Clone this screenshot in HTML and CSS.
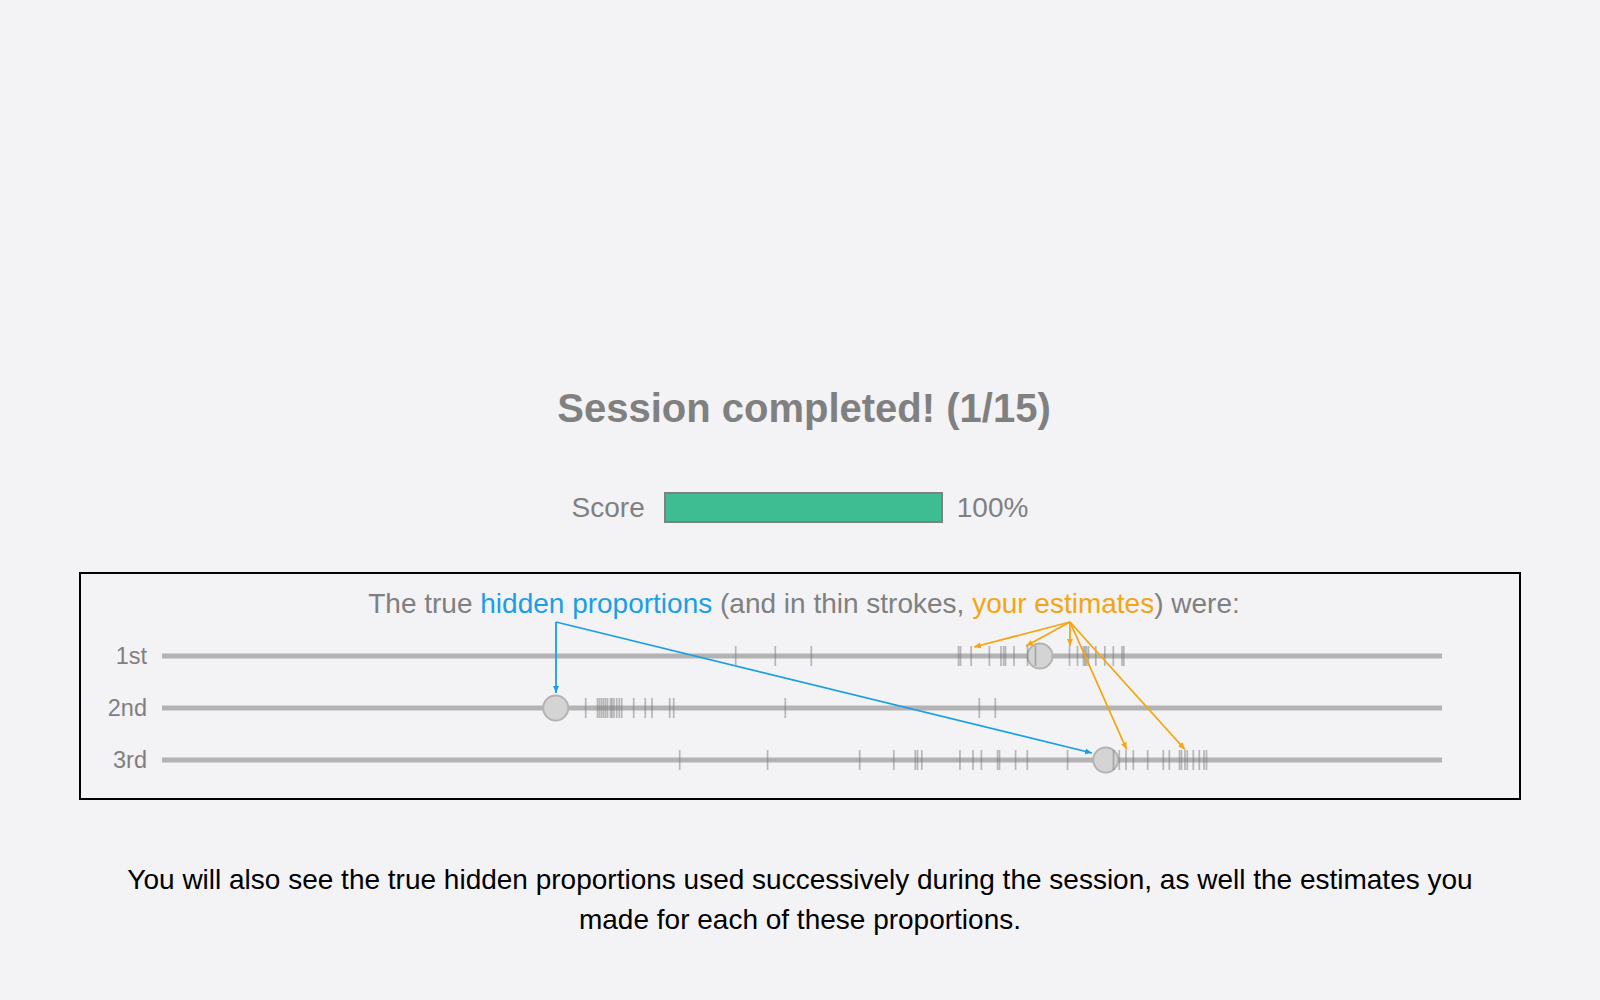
FILE: index.html
```html
<!DOCTYPE html>
<html lang="en">
<head>
<meta charset="utf-8">
<title>Session completed</title>
<link rel="stylesheet" href="styles.css">
</head>
<body>
<main class="page">
  <h1 class="title">Session completed! (1/15)</h1>
  <div class="score-row">
    <span class="score-label">Score</span>
    <div class="score-bar"><div class="score-fill" style="width:100%"></div></div>
    <span class="score-value">100%</span>
  </div>
  <section class="results">
    <p class="caption">The true <span class="blue">hidden proportions</span> (and in thin strokes, <span class="orange">your estimates</span>) were:</p>
    <svg class="chart" width="1438" height="179" viewBox="0 0 1438 179" xmlns="http://www.w3.org/2000/svg">
      <defs>
        <marker id="ab" markerUnits="userSpaceOnUse" markerWidth="8" markerHeight="8" refX="7" refY="4" orient="auto">
          <path d="M0,1 L7,4 L0,7 Z" fill="#1a9fe6"/>
        </marker>
        <marker id="ao" markerUnits="userSpaceOnUse" markerWidth="8" markerHeight="8" refX="7" refY="4" orient="auto">
          <path d="M0,1 L7,4 L0,7 Z" fill="#f4a512"/>
        </marker>
      </defs>
      <g class="labels">
        <text x="66" y="45">1st</text>
        <text x="66" y="97">2nd</text>
        <text x="66" y="149">3rd</text>
      </g>
      <g class="tracks">
        <line x1="81" y1="37" x2="1361" y2="37"/>
        <line x1="81" y1="89" x2="1361" y2="89"/>
        <line x1="81" y1="141" x2="1361" y2="141"/>
      </g>
      <g class="dots">
        <circle cx="959" cy="37" r="12.5"/>
        <circle cx="474.7" cy="89" r="12.5"/>
        <circle cx="1024.7" cy="141" r="12.5"/>
      </g>
      <g class="ticks" id="ticks"></g>
      <g class="arrows-blue">
        <line x1="475" y1="3" x2="475" y2="74" marker-end="url(#ab)"/>
        <line x1="475" y1="3" x2="1011" y2="134" marker-end="url(#ab)"/>
      </g>
      <g class="arrows-orange">
        <line x1="989" y1="3" x2="893" y2="28" marker-end="url(#ao)"/>
        <line x1="989" y1="3" x2="945" y2="27" marker-end="url(#ao)"/>
        <line x1="989" y1="3" x2="989" y2="27" marker-end="url(#ao)"/>
        <line x1="989" y1="3" x2="1045.7" y2="130.5" marker-end="url(#ao)"/>
        <line x1="989" y1="3" x2="1104" y2="130.5" marker-end="url(#ao)"/>
      </g>
    </svg>
  </section>
  <p class="note">You will also see the true hidden proportions used successively during the session, as well the estimates you made for each of these proportions.</p>
</main>
<script src="script.js"></script>
</body>
</html>
```

FILE: styles.css
```css
html, body {
  margin: 0;
  padding: 0;
  background: #f3f2f5;
}

body {
  font-family: "Liberation Sans", Arial, sans-serif;
  font-size: 28px;
  color: #808080;
}

.page {
  display: flex;
  flex-direction: column;
  align-items: center;
  padding-top: 385px;
}

.title {
  margin: 0;
  font-size: 40px;
  line-height: 46px;
  font-weight: bold;
  color: #808080;
  padding-left: 8px;
}

.score-row {
  margin-top: 61px;
  display: flex;
  align-items: center;
  height: 31px;
  line-height: 31px;
}

.score-label {
  margin-right: 19px;
}

.score-bar {
  width: 275px;
  height: 27px;
  border: 2px solid #808080;
  background: #f3f2f5;
}

.score-fill {
  height: 100%;
  background: #3dbd91;
}

.score-value {
  margin-left: 14px;
}

.results {
  margin-top: 49px;
  width: 1438px;
  border: 2px solid #000;
  display: flex;
  flex-direction: column;
  align-items: center;
}

.caption {
  margin: 0;
  padding-top: 14px;
  padding-left: 8px;
  line-height: 31px;
  height: 31px;
  color: #808080;
}

.blue { color: #1a9fe6; }
.orange { color: #f4a512; }

.chart {
  display: block;
}

.labels text {
  font-family: "Liberation Sans", Arial, sans-serif;
  font-size: 23.5px;
  fill: #808080;
  text-anchor: end;
}

.tracks line {
  stroke: #b3b3b3;
  stroke-width: 5;
}

.dots circle {
  fill: #d4d4d4;
  stroke: #b3b3b3;
  stroke-width: 2;
}

.ticks line {
  stroke: #7a7a7a;
  stroke-opacity: 0.5;
  stroke-width: 1.7;
}

.arrows-blue line {
  stroke: #1a9fe6;
  stroke-width: 1.8;
}

.arrows-orange line {
  stroke: #f4a512;
  stroke-width: 1.8;
}

.note {
  margin: 60px 0 0;
  width: 1400px;
  text-align: center;
  line-height: 40px;
  color: #000;
}
```

FILE: script.js
```js
(function () {
  var ox = 81;
  var rows = [
    { cy: 37, xs: [735.7, 775.3, 811.3, 958.6, 960.5, 971.2, 989.4, 1001, 1003.7, 1005.5, 1014, 1027.5, 1035.5, 1069.5, 1077.5, 1083.5, 1085, 1086.5, 1088.5, 1095.8, 1104.8, 1113.3, 1122, 1123.8] },
    { cy: 89, xs: [585.7, 597.5, 599.5, 601.5, 603.5, 605.5, 607.5, 610.5, 612, 614, 616.7, 619.3, 621.7, 633.7, 645.3, 652, 669.7, 673.7, 785.3, 979.3, 995.3] },
    { cy: 141, xs: [679.7, 767.6, 859.7, 893.8, 915.3, 917.5, 921.8, 960, 973, 981.4, 997.6, 999.5, 1015.6, 1027.3, 1067.6, 1113.5, 1119.3, 1126, 1133.3, 1147.7, 1163.3, 1169.3, 1179.5, 1181.5, 1185, 1187.3, 1193.3, 1199.3, 1204, 1206.5] }
  ];
  var g = document.getElementById('ticks');
  var ns = 'http://www.w3.org/2000/svg';
  rows.forEach(function (r) {
    r.xs.forEach(function (x) {
      var l = document.createElementNS(ns, 'line');
      var px = x - ox;
      l.setAttribute('x1', px);
      l.setAttribute('x2', px);
      l.setAttribute('y1', r.cy - 10);
      l.setAttribute('y2', r.cy + 10);
      g.appendChild(l);
    });
  });
})();
```
